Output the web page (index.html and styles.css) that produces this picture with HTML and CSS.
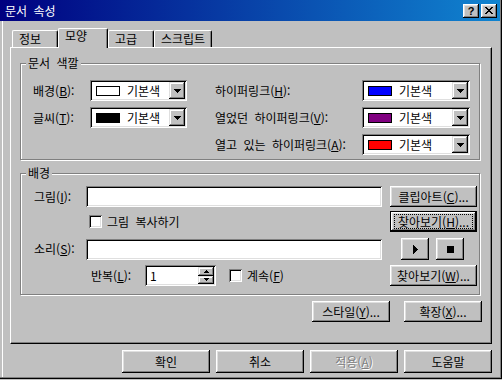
FILE: index.html
```html
<!DOCTYPE html>
<html lang="ko">
<head>
  <meta charset="UTF-8">
  <meta name="viewport" content="width=device-width, initial-scale=1.0">
  <title>문서 속성</title>
  <link rel="stylesheet" href="styles.css">
</head>
<body>
  <div class="window">
    <div class="titlebar">
      <span class="title">문서 속성</span>
      <div class="caption-buttons">
        <span class="caption-btn help">?</span>
        <span class="caption-btn">
          <svg width="8" height="7" viewBox="0 0 8 7" shape-rendering="crispEdges"><path d="M0 0h2v1H0zM6 0h2v1H6zM1 1h2v1H1zM5 1h2v1H5zM2 2h4v1H2zM3 3h2v1H3zM2 4h4v1H2zM1 5h2v1H1zM5 5h2v1H5zM0 6h2v1H0zM6 6h2v1H6z"/></svg>
        </span>
      </div>
    </div>

    <div class="client">
      <div class="tabs">
        <span class="tab">정보</span>
        <span class="tab active">모양</span>
        <span class="tab">고급</span>
        <span class="tab">스크립트</span>
      </div>

      <div class="panel">
        <fieldset class="group">
          <legend>문서 색깔</legend>
          <div class="color-grid">
            <span>배경(<u>B</u>):</span>
            <div class="combo short">
              <span class="swatch white"></span>
              <span class="combo-text">기본색</span>
              <span class="drop-btn"><svg width="7" height="4" viewBox="0 0 7 4" shape-rendering="crispEdges"><path d="M0 0h7v1H0zM1 1h5v1H1zM2 2h3v1H2zM3 3h1v1H3z"/></svg></span>
            </div>
            <span>하이퍼링크(<u>H</u>):</span>
            <div class="combo">
              <span class="swatch blue"></span>
              <span class="combo-text">기본색</span>
              <span class="drop-btn"><svg width="7" height="4" viewBox="0 0 7 4" shape-rendering="crispEdges"><path d="M0 0h7v1H0zM1 1h5v1H1zM2 2h3v1H2zM3 3h1v1H3z"/></svg></span>
            </div>

            <span>글씨(<u>T</u>):</span>
            <div class="combo short">
              <span class="swatch black"></span>
              <span class="combo-text">기본색</span>
              <span class="drop-btn"><svg width="7" height="4" viewBox="0 0 7 4" shape-rendering="crispEdges"><path d="M0 0h7v1H0zM1 1h5v1H1zM2 2h3v1H2zM3 3h1v1H3z"/></svg></span>
            </div>
            <span>열었던 하이퍼링크(<u>V</u>):</span>
            <div class="combo">
              <span class="swatch purple"></span>
              <span class="combo-text">기본색</span>
              <span class="drop-btn"><svg width="7" height="4" viewBox="0 0 7 4" shape-rendering="crispEdges"><path d="M0 0h7v1H0zM1 1h5v1H1zM2 2h3v1H2zM3 3h1v1H3z"/></svg></span>
            </div>

            <span class="far">열고 있는 하이퍼링크(<u>A</u>):</span>
            <div class="combo">
              <span class="swatch red"></span>
              <span class="combo-text">기본색</span>
              <span class="drop-btn"><svg width="7" height="4" viewBox="0 0 7 4" shape-rendering="crispEdges"><path d="M0 0h7v1H0zM1 1h5v1H1zM2 2h3v1H2zM3 3h1v1H3z"/></svg></span>
            </div>
          </div>
        </fieldset>

        <fieldset class="group">
          <legend>배경</legend>
          <div class="bg-rows">
            <div class="bg-row first">
              <span class="field-label">그림(<u>I</u>):</span>
              <span class="textbox"></span>
              <button class="btn side">클립아트(<u>C</u>)...</button>
            </div>

            <div class="bg-row">
              <span class="check indent"><span class="checkbox"></span>그림 복사하기</span>
              <button class="btn side focused"><span class="focus-ring">찾아보기(<u>H</u>)...</span></button>
            </div>

            <div class="bg-row sound">
              <span class="field-label">소리(<u>S</u>):</span>
              <span class="textbox"></span>
              <div class="media-buttons">
                <button class="btn media"><svg width="5" height="9" viewBox="0 0 5 9" shape-rendering="crispEdges"><path d="M0 0h1v9H0zM1 1h1v7H1zM2 2h1v5H2zM3 3h1v3H3zM4 4h1v1H4z"/></svg></button>
                <button class="btn media"><span class="stop-icon"></span></button>
              </div>
            </div>

            <div class="bg-row repeat">
              <span class="repeat-label">반복(<u>L</u>):</span>
              <div class="spin">
                <span class="spin-value">1</span>
                <div class="spin-buttons">
                  <span><svg width="5" height="3" viewBox="0 0 5 3" shape-rendering="crispEdges"><path d="M2 0h1v1H2zM1 1h3v1H1zM0 2h5v1H0z"/></svg></span>
                  <span><svg width="5" height="3" viewBox="0 0 5 3" shape-rendering="crispEdges"><path d="M0 0h5v1H0zM1 1h3v1H1zM2 2h1v1H2z"/></svg></span>
                </div>
              </div>
              <span class="check loop"><span class="checkbox"></span>계속(<u>F</u>)</span>
              <button class="btn side">찾아보기(<u>W</u>)...</button>
            </div>
          </div>
        </fieldset>

        <div class="panel-actions">
          <button class="btn small">스타일(<u>Y</u>)...</button>
          <button class="btn small">확장(<u>X</u>)...</button>
        </div>
      </div>

      <div class="dialog-buttons">
        <button class="btn wide">확인</button>
        <button class="btn wide">취소</button>
        <button class="btn wide" disabled>적용(<u>A</u>)</button>
        <button class="btn wide">도움말</button>
      </div>
    </div>
  </div>
</body>
</html>
```

FILE: styles.css
```css
* {
  box-sizing: border-box;
}

body {
  margin: 0;
  background: #c0c0c0;
  font-family: "Noto Sans CJK KR", "Noto Sans", sans-serif;
  font-size: 12px;
  line-height: 14px;
  color: #000;
  word-spacing: 3px;
}

u {
  text-underline-offset: 1px;
}

.window {
  width: 502px;
  height: 379px;
  background: #c0c0c0;
  box-shadow: inset -1px -1px #000, inset -2px -2px #808080, inset 2px 0 #c0c0c0, inset 3px 0 #fff;
}

/* title bar */
.titlebar {
  display: flex;
  align-items: center;
  justify-content: space-between;
  height: 21px;
  margin-right: 2px;
  padding: 0 3px 0 5px;
  background: linear-gradient(to right, #000080, #1084d0);
  color: #fff;
}

.caption-buttons {
  display: flex;
  gap: 2px;
}

.caption-btn {
  display: flex;
  align-items: center;
  justify-content: center;
  width: 16px;
  height: 14px;
  background: #c0c0c0;
  color: #000;
  box-shadow: inset -1px -1px #000, inset 1px 1px #fff, inset -2px -2px #808080, inset 2px 2px #dfdfdf;
}

.caption-btn.help {
  font-family: "Liberation Sans", sans-serif;
  font-size: 11px;
  font-weight: bold;
}

/* tabs */
.client {
  padding: 7px 10px 0;
}

.tabs {
  display: flex;
  align-items: flex-end;
  height: 19px;
  padding-left: 2px;
}

.tab {
  height: 17px;
  min-width: 46px;
  padding: 1px 6px 0;
  border: 1px solid #fff;
  border-right-color: #000;
  border-bottom: 0;
  border-radius: 2px 2px 0 0;
  box-shadow: inset -1px 0 #808080;
}

.tab.active {
  position: relative;
  height: 20px;
  min-width: 50px;
  margin-bottom: -1px;
  padding-top: 0;
  background: #c0c0c0;
}

.panel {
  height: 297px;
  padding: 8px 0 0 9px;
  border: 1px solid;
  border-color: #fff #000 #000 #fff;
  box-shadow: inset -1px -1px #808080;
}

/* group boxes */
.group {
  width: 460px;
  min-width: 0;
  margin: 0;
  padding: 0;
  border: 1px solid #808080;
  box-shadow: 1px 1px #fff, inset 1px 1px #fff;
}

.group legend {
  margin-left: 5px;
  padding: 0 2px;
  background: #c0c0c0;
}

.group + .group {
  margin-top: 6px;
}

.color-grid {
  display: grid;
  grid-template-columns: 57px 125px 147px 108px;
  grid-auto-rows: 21px;
  row-gap: 6px;
  align-items: center;
  padding: 10px 0 4px 12px;
}

.color-grid .far {
  grid-column: 3;
}

.combo {
  display: flex;
  align-items: center;
  height: 21px;
  padding: 2px;
  background: #fff;
  box-shadow: inset 1px 1px #808080, inset -1px -1px #fff, inset 2px 2px #000, inset -2px -2px #dfdfdf;
}

.combo.short {
  width: 97px;
}

.swatch {
  width: 24px;
  height: 10px;
  margin-left: 4px;
  border: 1px solid #000;
}

.swatch.white { background: #fff; }
.swatch.black { background: #000; }
.swatch.blue { background: #0000ff; }
.swatch.purple { background: #800080; }
.swatch.red { background: #ff0000; }

.combo-text {
  margin-left: 7px;
}

.drop-btn {
  display: flex;
  align-items: center;
  justify-content: center;
  width: 16px;
  height: 17px;
  margin-left: auto;
  background: #c0c0c0;
  box-shadow: inset -1px -1px #000, inset 1px 1px #dfdfdf, inset -2px -2px #808080, inset 2px 2px #fff;
}

/* background group */
.bg-rows {
  padding: 0 2px 8px 13px;
}

.bg-row {
  display: flex;
  align-items: center;
  height: 21px;
  margin-top: 4px;
}

.bg-row.first {
  margin-top: 6px;
}

.bg-row.sound {
  height: 22px;
  margin-top: 6px;
}

.bg-row.repeat {
  margin-top: 5px;
}

.field-label {
  width: 52px;
}

.textbox {
  width: 296px;
  height: 21px;
  background: #fff;
  box-shadow: inset 1px 1px #808080, inset -1px -1px #fff, inset 2px 2px #000, inset -2px -2px #dfdfdf;
}

.check {
  display: flex;
  align-items: center;
}

.check.indent {
  margin-left: 55px;
}

.check.loop {
  margin-left: 13px;
}

.checkbox {
  width: 13px;
  height: 13px;
  margin-right: 5px;
  background: #fff;
  box-shadow: inset 1px 1px #808080, inset -1px -1px #fff, inset 2px 2px #000, inset -2px -2px #dfdfdf;
}

.media-buttons {
  display: flex;
  gap: 7px;
  margin-left: 19px;
}

.repeat-label {
  width: 54px;
  margin-left: 57px;
}

.spin {
  display: flex;
  width: 71px;
  height: 21px;
  padding: 2px;
  background: #fff;
  box-shadow: inset 1px 1px #808080, inset -1px -1px #fff, inset 2px 2px #000, inset -2px -2px #dfdfdf;
}

.spin-value {
  flex: 1;
  padding-left: 3px;
  line-height: 17px;
}

.spin-buttons {
  display: flex;
  flex-direction: column;
  width: 16px;
}

.spin-buttons span {
  display: flex;
  flex: 1;
  align-items: center;
  justify-content: center;
  background: #c0c0c0;
  box-shadow: inset -1px -1px #000, inset 1px 1px #dfdfdf, inset -2px -2px #808080, inset 2px 2px #fff;
}

/* buttons */
.btn {
  display: flex;
  align-items: center;
  justify-content: center;
  padding: 0;
  border: 0;
  background: #c0c0c0;
  color: #000;
  font: inherit;
  word-spacing: inherit;
  box-shadow: inset -1px -1px #000, inset 1px 1px #fff, inset -2px -2px #808080, inset 2px 2px #dfdfdf;
}

.btn.side {
  width: 87px;
  height: 21px;
  margin-left: auto;
}

.btn.focused {
  box-shadow: inset 0 0 0 1px #000, inset -2px -2px #000, inset 2px 2px #fff, inset -3px -3px #808080, inset 3px 3px #dfdfdf;
}

.focus-ring {
  display: flex;
  align-items: center;
  justify-content: center;
  width: 79px;
  height: 15px;
  border: 1px dotted #000;
}

.btn.media {
  width: 28px;
  height: 22px;
}

.stop-icon {
  width: 7px;
  height: 7px;
  background: #000;
}

.btn.small {
  width: 78px;
  height: 21px;
}

.btn.wide {
  width: 88px;
  height: 23px;
}

.btn:disabled {
  color: #808080;
  text-shadow: 1px 1px #fff;
}

.panel-actions {
  display: flex;
  justify-content: flex-end;
  gap: 14px;
  margin-top: 6px;
  padding-right: 9px;
}

.dialog-buttons {
  display: flex;
  justify-content: flex-end;
  gap: 6px;
  margin-top: 6px;
}
```
